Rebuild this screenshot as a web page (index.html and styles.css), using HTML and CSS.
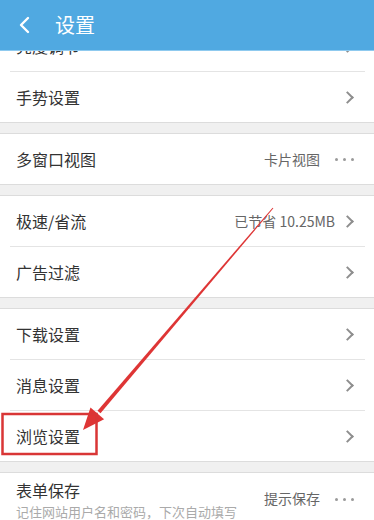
FILE: index.html
```html
<!DOCTYPE html>
<html lang="zh-CN">
<head>
  <meta charset="UTF-8" />
  <meta name="viewport" content="width=device-width, initial-scale=1.0" />
  <title>设置</title>
  <link rel="stylesheet" href="styles.css">
</head>
<body>
  <div class="page">
    <!-- 顶部标题栏 -->
    <header class="topbar">
      <svg class="back" width="14" height="20" viewBox="0 0 14 20" aria-hidden="true">
        <path d="M10 3 L3 10 L10 17" fill="none" stroke="#fff" stroke-width="2.4" stroke-linecap="round" stroke-linejoin="round"/>
      </svg>
      <h1 class="title">设置</h1>
    </header>

    <!-- 设置列表（已向下滚动一点） -->
    <main class="scroll">
      <section class="group first">
        <div class="row"><span class="label">亮度调节</span><i class="chev"></i></div>
        <div class="sep"></div>
        <div class="row"><span class="label">手势设置</span><i class="chev"></i></div>
      </section>

      <section class="group">
        <div class="row">
          <span class="label">多窗口视图</span>
          <span class="value">卡片视图</span>
          <span class="dots"><b></b><b></b><b></b></span>
        </div>
      </section>

      <section class="group">
        <div class="row">
          <span class="label">极速/省流</span>
          <span class="value near">已节省 10.25MB</span><i class="chev"></i>
        </div>
        <div class="sep"></div>
        <div class="row"><span class="label">广告过滤</span><i class="chev"></i></div>
      </section>

      <section class="group">
        <div class="row"><span class="label">下载设置</span><i class="chev"></i></div>
        <div class="sep"></div>
        <div class="row"><span class="label">消息设置</span><i class="chev"></i></div>
        <div class="sep"></div>
        <div class="row"><span class="label">浏览设置</span><i class="chev"></i></div>
      </section>

      <section class="group">
        <div class="row tall">
          <div class="stack">
            <span class="label">表单保存</span>
            <span class="sub">记住网站用户名和密码，下次自动填写</span>
          </div>
          <span class="value">提示保存</span>
          <span class="dots"><b></b><b></b><b></b></span>
        </div>
      </section>
    </main>

    <!-- 红色标注：箭头 + 框 -->
    <svg class="mark" width="374" height="520" viewBox="0 0 374 520" aria-hidden="true">
      <polygon points="273.4,208.3 272.6,207.7 97.5,410.7 100.5,413.3" fill="#de3535"/>
      <polygon points="83,430 90.5,407.4 104.1,419.2" fill="#de3535"/>
      <rect x="2.5" y="414" width="94" height="40" fill="none" stroke="#d93636" stroke-width="2.5"/>
    </svg>
  </div>
</body>
</html>
```

FILE: styles.css
```css
/* ─── 0. 리셋 ─── */
*,*::before,*::after{box-sizing:border-box;margin:0;padding:0}
html,body{
  width:100%;height:100%;overflow:hidden;background:#f0f0f0;
  font-family:"Noto Sans CJK SC","Noto Sans",sans-serif;
}

.page{position:relative;width:374px;height:520px;display:flex;flex-direction:column}

/* ─── 1. 标题栏 ─── */
.topbar{
  height:51px;flex:none;display:flex;align-items:center;
  padding-left:18px;background:#50a9e1;border-bottom:1px solid #8fcaef;
  position:relative;z-index:2;
}
.back{display:block}
.title{margin-left:23px;font-size:20px;font-weight:400;color:#fff;line-height:1}

/* ─── 2. 列表 ─── */
.scroll{flex:1;overflow:hidden}
.group{
  background:#fff;border-top:1px solid #dcdcdc;border-bottom:1px solid #dcdcdc;
  margin-bottom:10px;
}
.group.first{margin-top:-31px}
.sep{height:1px;margin:0 9px 0 10px;background:#e4e4e4}

.row{height:50px;display:flex;align-items:center;padding:0 18px 0 16px}
.row.tall{height:auto;align-items:flex-start;padding-top:6px}
.label{flex:1;font-size:16px;color:#333;line-height:22px}
.value{font-size:14px;color:#666;margin-right:15px}
.value.near{margin-right:8px}
.row.tall .value{margin-top:9px}

/* 三个点 */
.dots{display:flex;gap:5px;padding-right:2px}
.dots b{width:3px;height:3px;border-radius:50%;background:#9a9a9a}
.row.tall .dots{margin-top:19px}

.stack{flex:1;display:flex;flex-direction:column}
.sub{font-size:13px;color:#aaa;line-height:18px;margin-top:2px}

/* 右箭头 */
.chev{
  width:9px;height:9px;margin-right:4px;
  border-top:2px solid #8e8e8e;border-right:2px solid #8e8e8e;transform:rotate(45deg);
}

/* ─── 3. 标注层 ─── */
.mark{position:absolute;left:0;top:0;pointer-events:none;z-index:3}
```
